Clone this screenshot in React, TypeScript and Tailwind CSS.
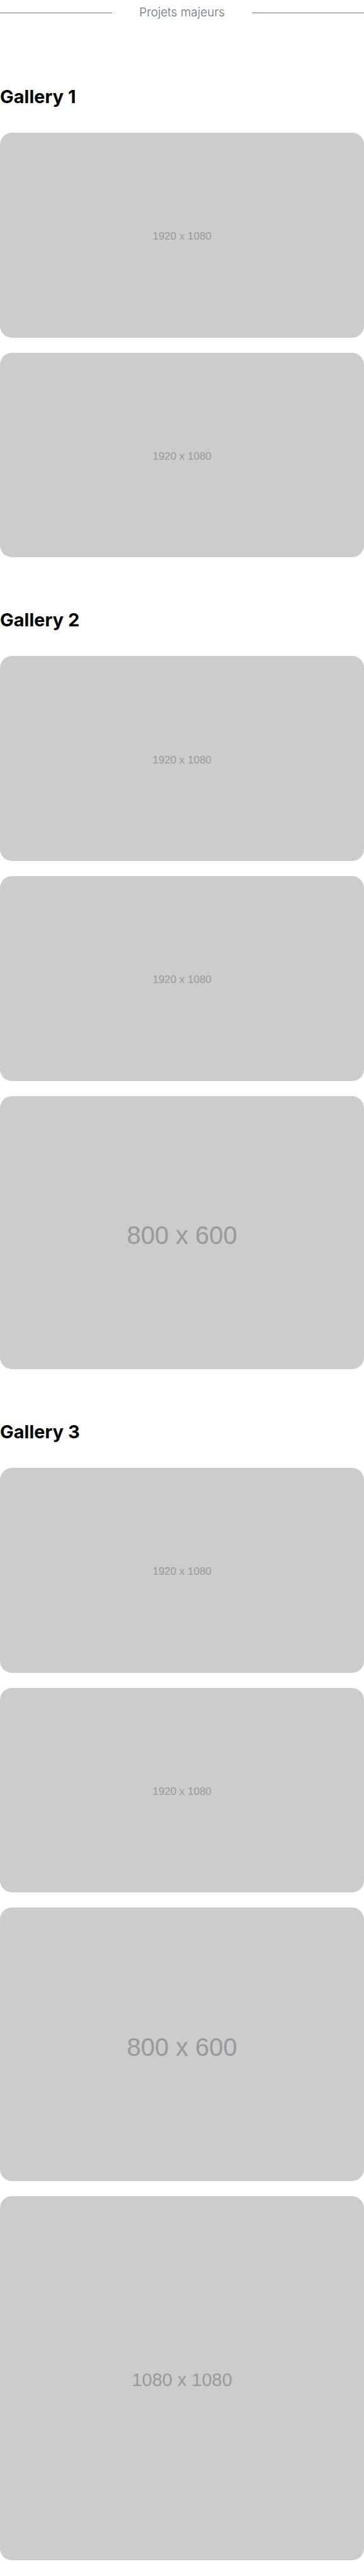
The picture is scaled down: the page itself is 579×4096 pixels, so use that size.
type Placeholder = "wide" | "classic" | "square";

const placeholders: Record<Placeholder, { label: string; className: string }> = {
  wide: { label: "1920 x 1080", className: "aspect-video pt-1 text-[17px]" },
  classic: { label: "800 x 600", className: "aspect-[4/3] pt-2 text-[40px]" },
  square: { label: "1080 x 1080", className: "aspect-square pt-1.5 text-[29px]" },
};

const galleries: { title: string; images: Placeholder[] }[] = [
  { title: "Gallery 1", images: ["wide", "wide"] },
  { title: "Gallery 2", images: ["wide", "wide", "classic"] },
  { title: "Gallery 3", images: ["wide", "wide", "classic", "square"] },
];

function Divider({ children }: { children: string }) {
  return (
    <header className="mb-3.5 flex h-10 items-center text-gray-500">
      <span className="h-px flex-1 bg-gray-500" />
      <p className="px-[43px] text-[19px] leading-10 font-light">{children}</p>
      <span className="h-px flex-1 bg-gray-500" />
    </header>
  );
}

function Picture({ kind }: { kind: Placeholder }) {
  const { label, className } = placeholders[kind];
  return (
    <li
      className={`flex w-full items-center justify-center rounded-[19px] bg-[#cccccc] font-['Liberation_Sans',Arial,sans-serif] leading-none text-[#999999] ${className}`}
    >
      {label}
    </li>
  );
}

export default function App() {
  return (
    <main className="bg-white pb-[25px] font-[Inter,sans-serif] text-black">
      <Divider>Projets majeurs</Divider>
      {galleries.map(({ title, images }) => (
        <section key={title} className="pt-[78px]">
          <h2 className="mb-9 text-[29px] leading-[43px] font-bold">{title}</h2>
          <ul className="flex flex-col gap-6">
            {images.map((kind, i) => (
              <Picture key={i} kind={kind} />
            ))}
          </ul>
        </section>
      ))}
    </main>
  );
}
